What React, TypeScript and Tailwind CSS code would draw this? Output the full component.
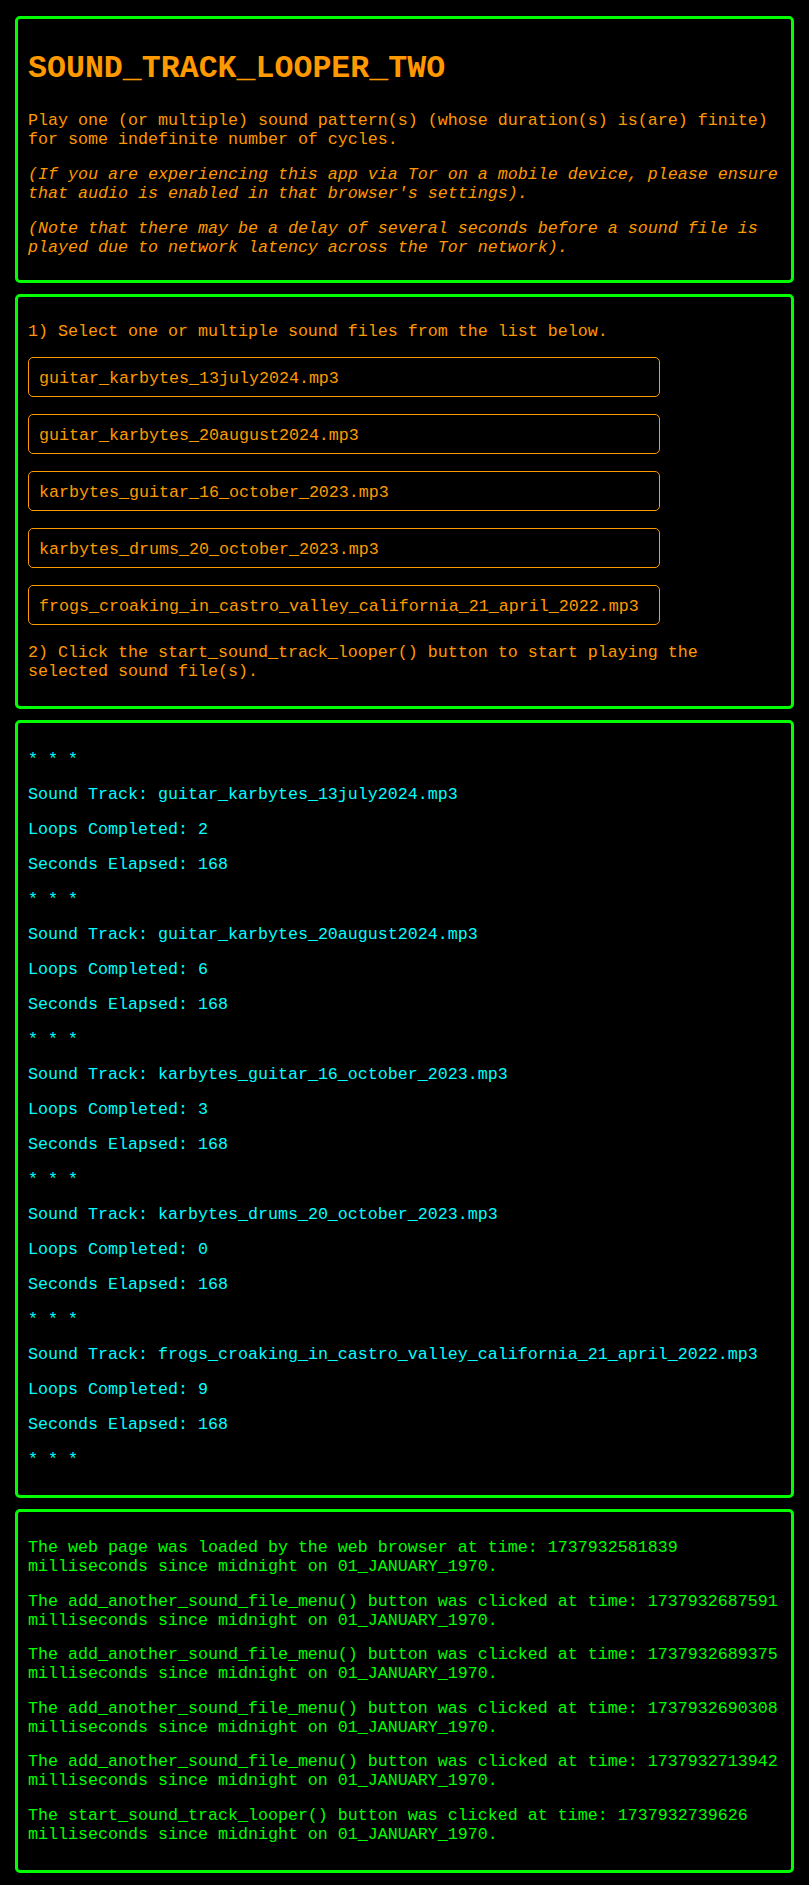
import React from "react";

interface Track {
  name: string;
  loops: number;
}

const tracks: Track[] = [
  { name: "guitar_karbytes_13july2024.mp3", loops: 2 },
  { name: "guitar_karbytes_20august2024.mp3", loops: 6 },
  { name: "karbytes_guitar_16_october_2023.mp3", loops: 3 },
  { name: "karbytes_drums_20_october_2023.mp3", loops: 0 },
  { name: "frogs_croaking_in_castro_valley_california_21_april_2022.mp3", loops: 9 },
];

/// log lines shown in the last panel
const events: string[] = [
  "The web page was loaded by the web browser at time: 1737932581839",
  "The add_another_sound_file_menu() button was clicked at time: 1737932687591",
  "The add_another_sound_file_menu() button was clicked at time: 1737932689375",
  "The add_another_sound_file_menu() button was clicked at time: 1737932690308",
  "The add_another_sound_file_menu() button was clicked at time: 1737932713942",
  "The start_sound_track_looper() button was clicked at time: 1737932739626",
];

const secondsElapsed = 168;

const Panel: React.FC<{ children: React.ReactNode; className?: string }> = ({
  children,
  className,
}) => (
  <div
    className={
      "border-[3px] border-[#00ff00] rounded-[5px] px-[10px] flex flex-col " + (className ?? "")
    }
  >
    {children}
  </div>
);

const App: React.FC = () => {
  return (
    <div className="min-h-screen bg-black px-[15px] pt-[16px] pb-[12px] flex flex-col gap-[11px] font-['Liberation_Mono','Courier_New',monospace] text-[16.67px] leading-[19px]">
      {/* Title panel */}
      <Panel className="pt-[26.5px] pb-[23.5px] gap-[16px]">
        <h1 className="text-[#ff9900] text-[31.6px] leading-[36px] font-bold mt-[5px] mb-[8px]">
          SOUND_TRACK_LOOPER_TWO
        </h1>
        <p className="text-[#ff9900]">
          Play one (or multiple) sound pattern(s) (whose duration(s) is(are) finite) for some
          indefinite number of cycles.
        </p>
        <p className="text-[#ff9900] italic">
          (If you are experiencing this app via Tor on a mobile device, please ensure that audio is
          enabled in that browser's settings).
        </p>
        <p className="text-[#ff9900] italic">
          (Note that there may be a delay of several seconds before a sound file is played due to
          network latency across the Tor network).
        </p>
      </Panel>

      {/* File selection panel */}
      <Panel className="pt-[24.5px] pb-[25px] gap-[16.5px]">
        <p className="text-[#ff9900]">1) Select one or multiple sound files from the list below.</p>
        <div className="flex flex-col gap-[17px] mb-[1.5px]">
          {tracks.map((track) => (
            <div
              key={track.name}
              className="w-[632px] h-[40px] flex items-center border border-[#ff9900] rounded-[5px] pl-[10px] pt-[2px] text-[#ff9900]"
            >
              {track.name}
            </div>
          ))}
        </div>
        <p className="text-[#ff9900]">
          2) Click the start_sound_track_looper() button to start playing the selected sound
          file(s).
        </p>
      </Panel>

      {/* Status panel */}
      <Panel className="pt-[26.5px] pb-[26px] gap-[16px]">
        {tracks.map((track) => (
          <React.Fragment key={track.name}>
            <p className="text-[#00ffff]">* * *</p>
            <p className="text-[#00ffff]">Sound Track: {track.name}</p>
            <p className="text-[#00ffff]">Loops Completed: {track.loops}</p>
            <p className="text-[#00ffff]">Seconds Elapsed: {secondsElapsed}</p>
          </React.Fragment>
        ))}
        <p className="text-[#00ffff]">* * *</p>
      </Panel>

      {/* Event log panel */}
      <Panel className="pt-[26.5px] pb-[26.5px] gap-[15.6px]">
        {events.map((line) => (
          <p key={line} className="text-[#00ff00]">
            {line} milliseconds since midnight on 01_JANUARY_1970.
          </p>
        ))}
      </Panel>
    </div>
  );
};

export default App;
